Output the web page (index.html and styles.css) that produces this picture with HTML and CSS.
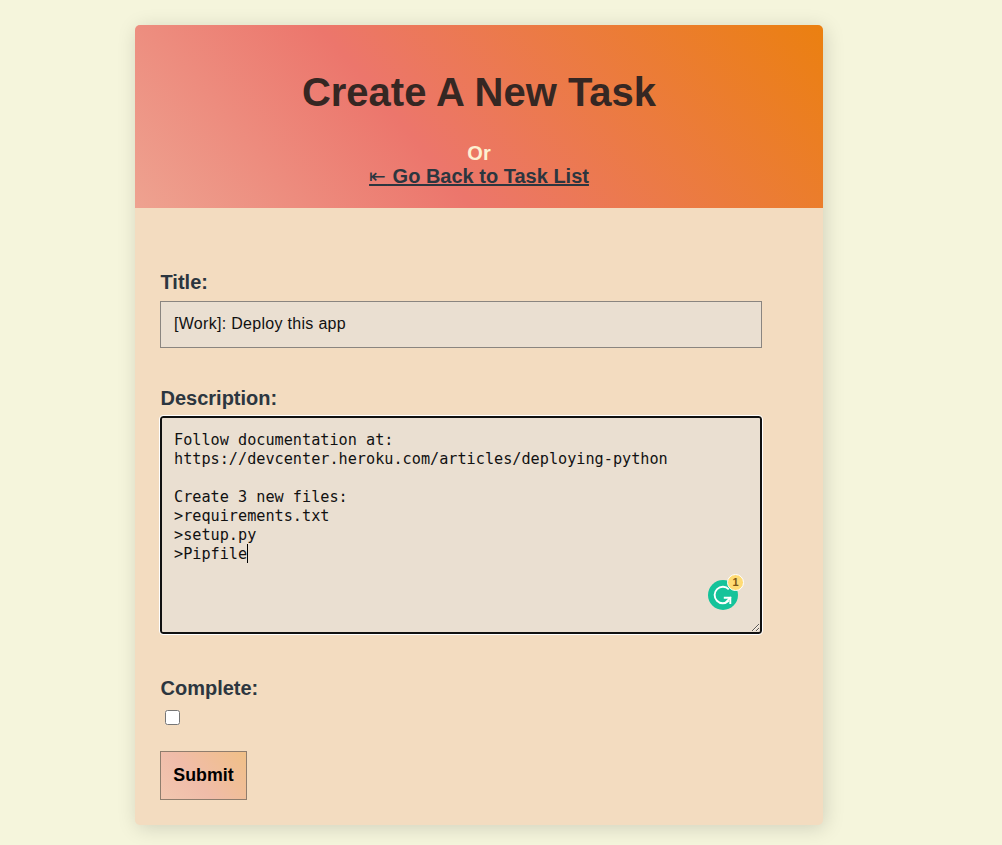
FILE: index.html
```html
<!DOCTYPE html>
<html lang="en">
<head>
<meta charset="utf-8">
<title>Create A New Task</title>
<link rel="stylesheet" href="styles.css">
</head>
<body>
<main class="card">
  <header class="card-header">
    <h1 class="heading">Create A New Task</h1>
    <div class="or">Or</div>
    <a class="back" href="#"><span class="back-arrow">⇤</span> Go Back to Task List</a>
  </header>
  <form class="form">
    <label class="label" for="title">Title:</label>
    <input class="field" id="title" type="text" value="[Work]: Deploy this app">
    <label class="label label-description" for="description">Description:</label>
    <div class="editor">
      <textarea class="field area" id="description" spellcheck="false">Follow documentation at:
https://devcenter.heroku.com/articles/deploying-python

Create 3 new files:
&gt;requirements.txt
&gt;setup.py
&gt;Pipfile</textarea>
      <span class="caret"></span>
      <div class="assistant">
        <svg viewBox="0 0 30 30" width="30" height="30"><circle cx="15" cy="15" r="15" fill="#15c39a"/><path d="M20.8 9.4A8.2 8.2 0 1 0 20.6 20.8M15.8 17.8H22.3V24" fill="none" stroke="#fff" stroke-width="1.9"/><path d="M22.9 17.2L17.8 22.3" stroke="#fff" stroke-width="1.9"/></svg>
        <span class="badge">1</span>
      </div>
    </div>
    <label class="label label-complete" for="complete">Complete:</label>
    <input class="check" id="complete" type="checkbox">
    <button class="submit" type="button">Submit</button>
  </form>
</main>
</body>
</html>
```
FILE: styles.css
```css
* { box-sizing: border-box; }
body {
  margin: 0;
  height: 845px;
  overflow: hidden;
  background: #f5f5dc;
  font-family: "Liberation Sans", Arial, sans-serif;
  color: #2c363f;
}
.card {
  width: 688px;
  height: 800px;
  margin: 25px 0 0 135px;
  border-radius: 5px;
  background: #f3dcc0;
  box-shadow: 2px 3px 20px rgba(0, 0, 0, 0.15);
}
.card-header {
  height: 183px;
  padding-top: 44px;
  border-radius: 5px 5px 0 0;
  background: linear-gradient(50deg, #eea290 0%, #ec766c 40%, #eb8010 100%);
  text-align: center;
  font-size: 20px;
  font-weight: bold;
  line-height: 23px;
}
.heading {
  margin: 0 0 27px;
  font-size: 40px;
  line-height: 46px;
  color: #352723;
}
.or { color: #fdf0d2; }
.back {
  color: #2c363f;
  text-underline-offset: 1px;
  text-decoration-thickness: 2px;
  text-decoration-skip-ink: none;
}
.back-arrow {
  font-family: "DejaVu Sans", sans-serif;
  font-weight: normal;
  letter-spacing: 1.2px;
  line-height: 1;
}
.form {
  display: flex;
  flex-direction: column;
  align-items: flex-start;
  padding: 63px 25px 0;
}
.label {
  padding-left: 0.5px;
  font-size: 20px;
  font-weight: bold;
  line-height: 23px;
}
.label-description { margin-top: 39px; }
.label-complete { margin-top: 43px; }
.field {
  display: block;
  width: 602px;
  height: 47px;
  margin-top: 7px;
  padding: 12px 13px 14px;
  border: 1px solid #8a8580;
  border-radius: 0;
  background: #eadfd1;
  color: #111;
  font: 16px "Liberation Sans", Arial, sans-serif;
  letter-spacing: 0.3px;
}
.editor {
  position: relative;
  margin-top: 6px;
}
.area {
  height: 218px;
  margin: 0;
  padding: 13px 12px;
  border: 2px solid #101010;
  border-radius: 3px;
  outline: 1px solid #fff;
  resize: both;
  font: 15.2px/19px "DejaVu Sans Mono", monospace;
  letter-spacing: 0;
}
.caret {
  position: absolute;
  left: 87px;
  top: 128px;
  width: 1px;
  height: 19px;
  background: #000;
}
.assistant {
  position: absolute;
  left: 548px;
  top: 164px;
  width: 30px;
  height: 30px;
}
.badge {
  position: absolute;
  left: 19px;
  top: -6px;
  width: 17px;
  height: 17px;
  border: 1px solid #fff;
  border-radius: 50%;
  background: #ffdb74;
  color: #7c5514;
  font: bold 11px/15px "Liberation Sans", sans-serif;
  text-align: center;
}
.check {
  width: 15px;
  height: 15px;
  margin: 10px 0 0 5px;
}
.submit {
  width: 87px;
  height: 49px;
  margin-top: 26px;
  padding: 0;
  border: 1px solid #8f7d6d;
  background: linear-gradient(50deg, #f2c7b0 0%, #f0bca9 40%, #f0c087 100%);
  color: #000;
  font: bold 17.8px "Liberation Sans", Arial, sans-serif;
}
```
